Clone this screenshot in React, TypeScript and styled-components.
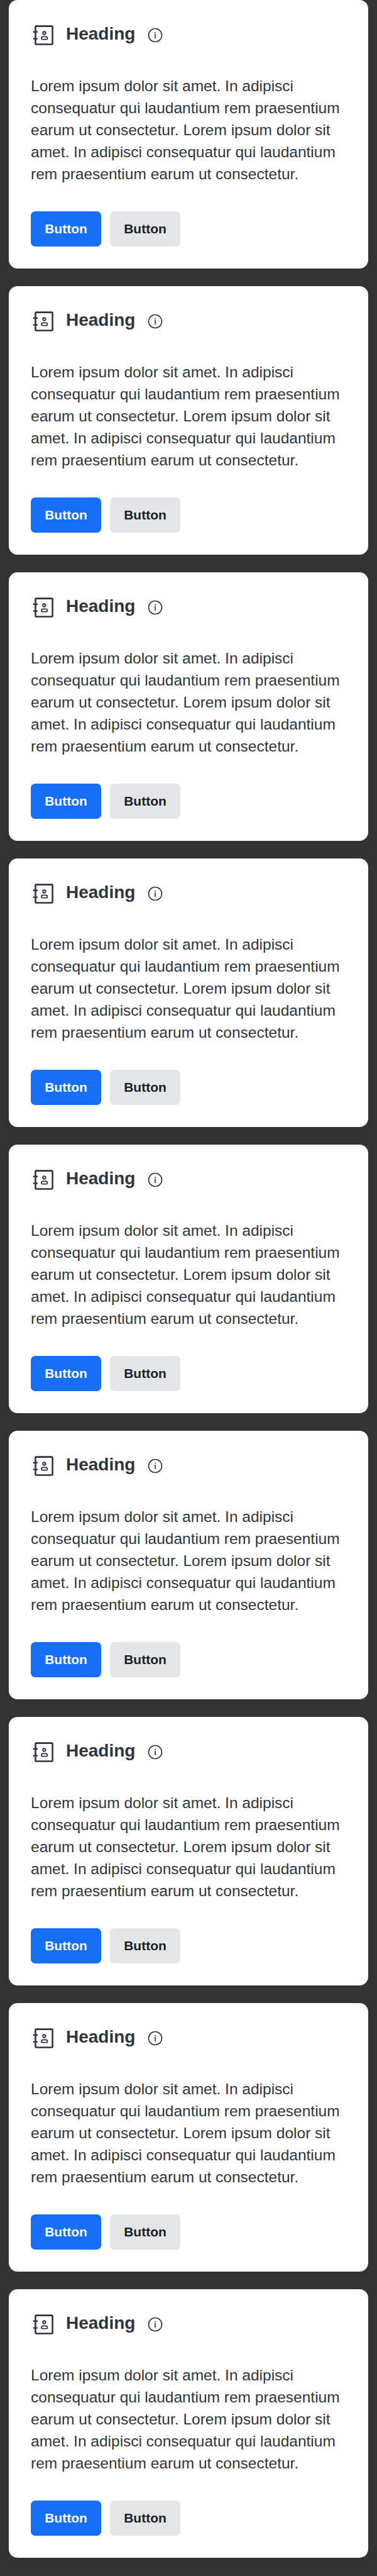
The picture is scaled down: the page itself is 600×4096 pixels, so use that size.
import React from "react";
import styled, { createGlobalStyle } from "styled-components";

const GlobalStyle = createGlobalStyle`
  body {
    margin: 0;
    background: #333333;
    font-family: "Liberation Sans", Arial, sans-serif;
  }
`;

const CardList = styled.main`
  display: flex;
  flex-direction: column;
  gap: 28px;
  padding: 0 14px 28px;
`;

const Card = styled.article`
  box-sizing: border-box;
  height: 427px;
  padding: 35px;
  border-radius: 14px;
  background: #ffffff;
  color: #2f353f;
`;

const CardHeader = styled.header`
  display: flex;
  align-items: center;
  height: 42px;
`;

const Title = styled.h2`
  margin: 0 17.5px 0 14px;
  padding-bottom: 5px;
  font-size: 28px;
  line-height: 37px;
  font-weight: 700;
`;

const CardText = styled.p`
  margin: 42px 0 0;
  font-size: 24.5px;
  line-height: 35px;
`;

const Actions = styled.div`
  display: flex;
  gap: 14px;
  margin-top: 42px;
`;

const Button = styled.button<{ $primary?: boolean }>`
  width: 112px;
  height: 56px;
  padding: 0 0 1px;
  border: 0;
  border-radius: 7px;
  background: ${(p) => (p.$primary ? "#146ff5" : "#e2e6e9")};
  color: ${(p) => (p.$primary ? "#ffffff" : "#1c2027")};
  font: 700 21px/28px "Liberation Sans", Arial, sans-serif;
`;

const Icon = styled.svg`
  display: block;
  flex: none;
  fill: none;
  stroke: currentColor;
`;

const ContactIcon = () => (
  <Icon width="42" height="42" viewBox="0 0 48 48" strokeWidth="3">
    <rect x="8.5" y="7.5" width="31" height="33" rx="1.2" />
    <path d="M5.2 18h6.4M5.2 30.4h6.4" strokeWidth="2.6" strokeLinecap="round" />
    <circle cx="24.4" cy="20" r="2.5" strokeWidth="2.2" />
    <path
      d="M19.4 30.3v-.7a2.8 2.8 0 0 1 2.8-2.8h5.2a2.8 2.8 0 0 1 2.8 2.8v.7a1.2 1.2 0 0 1-1.2 1.2h-8.4a1.2 1.2 0 0 1-1.2-1.2z"
      strokeWidth="2"
    />
  </Icon>
);

const InfoIcon = () => (
  <Icon width="28" height="28" viewBox="0 0 32 32" strokeWidth="1.9">
    <circle cx="16" cy="16" r="12" />
    <path d="M16 13.8v8M16 10.2v2" />
  </Icon>
);

const cards = Array.from({ length: 9 }, (_, i) => i);

export default function App() {
  return (
    <>
      <GlobalStyle />
      <CardList>
        {cards.map((id) => (
          <Card key={id}>
            <CardHeader>
              <ContactIcon />
              <Title>Heading</Title>
              <InfoIcon />
            </CardHeader>
            <CardText>
              Lorem ipsum dolor sit amet. In adipisci consequatur qui laudantium
              rem praesentium earum ut consectetur. Lorem ipsum dolor sit amet.
              In adipisci consequatur qui laudantium rem praesentium earum ut
              consectetur.
            </CardText>
            <Actions>
              <Button $primary>Button</Button>
              <Button>Button</Button>
            </Actions>
          </Card>
        ))}
      </CardList>
    </>
  );
}
